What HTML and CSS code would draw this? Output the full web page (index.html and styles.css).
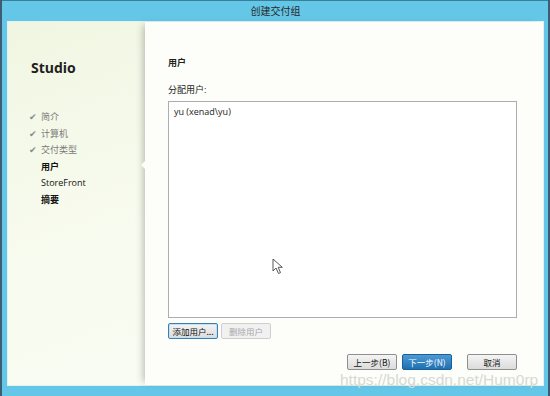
FILE: index.html
```html
<!DOCTYPE html>
<html>
<head>
<meta charset="utf-8">
<link rel="stylesheet" href="styles.css">
</head>
<body>
<div class="desk">
  <div class="window">
    <div class="titlebar">创建交付组</div>
    <div class="client">
      <aside class="sidebar">
        <div class="brand">Studio</div>
        <ul class="steps">
          <li class="done"><span class="chk">✔</span>简介</li>
          <li class="done"><span class="chk">✔</span>计算机</li>
          <li class="done"><span class="chk">✔</span>交付类型</li>
          <li class="current">用户</li>
          <li>StoreFront</li>
          <li class="bold">摘要</li>
        </ul>
      </aside>
      <main class="main">
        <span class="notch"></span>
        <h1 class="heading">用户</h1>
        <div class="label">分配用户:</div>
        <div class="listbox">
          <div class="item">yu (xenad\yu)</div>
        </div>
        <div class="listbtns">
          <button class="btn focus">添加用户...</button>
          <button class="btn disabled">删除用户</button>
        </div>
        <div class="footer">
          <button class="btn">上一步(B)</button>
          <button class="btn primary">下一步(N)</button>
          <button class="btn cancel">取消</button>
        </div>
        <div class="watermark">https://blog.csdn.net/Hum0rp</div>
        <svg class="cursor" width="12" height="17" viewBox="0 0 12 17"><path d="M1 1 L1 13 L4 10 L6.5 15.5 L8.5 14.6 L6.2 9.3 L10.3 9.3 Z" fill="#fff" stroke="#444" stroke-width="0.9" stroke-linejoin="round"/></svg>
      </main>
    </div>
  </div>
</div>
</body>
</html>
```

FILE: styles.css
```css
* { box-sizing: border-box; }
html, body { margin: 0; padding: 0; }
body {
  width: 550px; height: 396px; overflow: hidden;
  background: #3d5d74;
  font-family: "Open Sans", "Noto Sans CJK SC", sans-serif;
  font-size: 9px; color: #222;
}
.desk { padding-left: 2px; height: 396px; }
.window {
  width: 546px; height: 396px;
  background: #64c7e8;
  border-top: 1px solid #3a7f98;
  display: flex; flex-direction: column;
  padding: 0 4px 10px 5px;
}
.titlebar {
  height: 20px; line-height: 19px; text-align: center;
  font-family: "Noto Sans CJK SC", sans-serif;
  font-size: 10px; color: #2a2a2a;
}
.client {
  flex: 1; display: flex;
  background: linear-gradient(160deg, #f1f6e2 0%, #f8fbef 45%, #fbfdf6 100%);
  border: 1px solid #e4f1ee;
}
.sidebar { width: 137px; padding: 36px 0 0 23px; }
.brand { font-size: 14px; font-weight: 700; color: #1e1e1e; height: 20px; line-height: 20px; }
.steps { list-style: none; margin: 31px 0 0; padding: 0; }
.steps li { height: 16.5px; line-height: 16.5px; padding-left: 10px; position: relative; color: #111; }
.steps li.done { color: #7a7a7a; }
.steps li.current, .steps li.bold { font-weight: 700; color: #111; }
.chk { position: absolute; left: -2px; top: 0; font-size: 9px; color: #8a8a8a; }
.main {
  flex: 1; position: relative;
  background: #fdfef9;
  box-shadow: -5px 0 7px -3px rgba(0,0,0,0.24);
  padding: 35px 26px 0 23px;
  display: flex; flex-direction: column;
}
.notch {
  position: absolute; left: -4px; top: 139px;
  width: 0; height: 0;
  border-top: 4px solid transparent; border-bottom: 4px solid transparent;
  border-right: 4px solid #fdfef9;
}
.heading { margin: 0; font-size: 9px; font-weight: 700; height: 12px; line-height: 12px; font-family: "Noto Sans CJK SC", sans-serif; }
.label { margin-top: 15px; height: 12px; line-height: 12px; }
.listbox {
  margin-top: 5px; height: 217px;
  background: #fff; border: 1px solid #adadad;
  padding: 4px 5px;
}
.item { line-height: 12px; color: #222; }
.listbtns { display: flex; gap: 3px; margin-top: 5px; }
.btn {
  width: 50px; height: 16px; padding: 0;
  font-family: "Noto Sans CJK SC", sans-serif; font-size: 8.5px; color: #111;
  background: linear-gradient(#f4f4f4, #dcdcdc);
  border: 1px solid #8f8f8f; border-radius: 2px;
}
.btn.focus { border: 1px solid #3c7fb1; box-shadow: inset 0 0 0 1px #bfe0f5; }
.btn.disabled { color: #a8a8a8; background: #f1f1f1; border-color: #cfcfcf; }
.footer { display: flex; justify-content: flex-end; margin-top: 15px; gap: 5px; }
.btn.primary {
  color: #fff; background: linear-gradient(#4d9ad4, #1f70b3);
  border-color: #1a5f98;
}
.btn.cancel { margin-left: 10px; }
.watermark {
  position: absolute; left: 195px; top: 350px;
  font-family: "Liberation Sans", sans-serif; font-size: 15.5px; line-height: 15px; color: #d6d9d4;
  white-space: nowrap;
}
.cursor { position: absolute; left: 127px; top: 236px; }
```
